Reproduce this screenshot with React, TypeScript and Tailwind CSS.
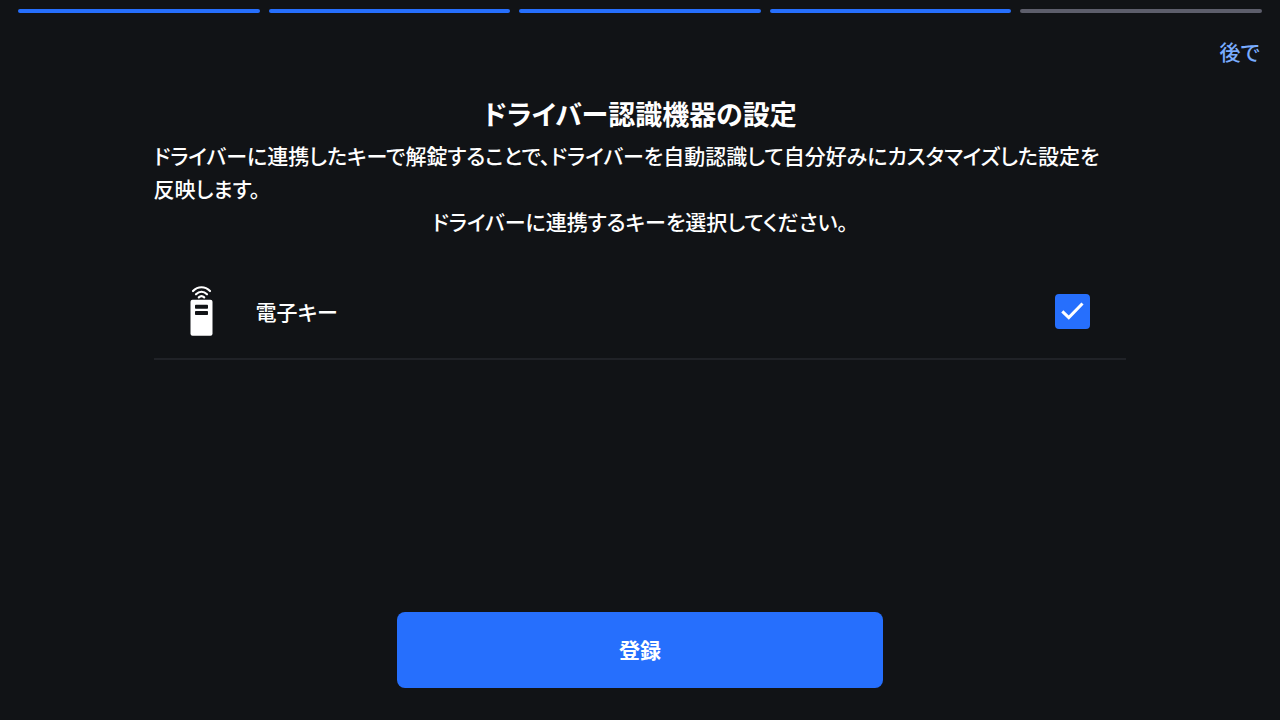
import React, { useState } from 'react';

interface KeyItem {
  id: string;
  label: string;
}

const TOTAL_STEPS = 5;
const CURRENT_STEP = 4;

const keys: KeyItem[] = [{ id: 'smart-key', label: '電子キー' }];

const KeyIcon: React.FC = () => (
  <svg width="24" height="50" viewBox="0 0 24 50" fill="none" aria-hidden="true">
    <g stroke="#fff" strokeWidth="2.2" strokeLinecap="round">
      <path d="M3 5C8 0 15 0 20 5" />
      <path d="M6 8.3C9.3 5 13.7 5 17 8.3" />
      <path d="M8.8 11.4C10.4 9.9 12.6 9.9 14.2 11.4" />
    </g>
    <rect x="0.5" y="13.8" width="22" height="36" rx="2" fill="#fff" />
    <rect x="5" y="18.8" width="13" height="4" rx="0.8" fill="#111316" />
    <rect x="5" y="25" width="13" height="4" rx="0.8" fill="#111316" />
  </svg>
);

const App: React.FC = () => {
  const [selected, setSelected] = useState<string[]>(['smart-key']);

  const toggleKey = (id: string) => {
    setSelected((prev) => (prev.includes(id) ? prev.filter((k) => k !== id) : [...prev, id]));
  };

  return (
    <div
      lang="ja"
      className="min-h-screen flex flex-col bg-[#111316] text-white text-[21px] leading-[33px] font-medium font-['Noto_Sans_CJK_JP',sans-serif] [font-feature-settings:'palt']"
    >
      <div className="flex gap-[9px] px-[18px] pt-[9px]">
        {Array.from({ length: TOTAL_STEPS }, (_, i) => (
          <div key={i} className={`h-1 flex-1 rounded-full ${i < CURRENT_STEP ? 'bg-[#266ffd]' : 'bg-[#5d5e6b]'}`} />
        ))}
      </div>

      <header className="flex justify-end px-5 pt-[22px]">
        <button type="button" className="text-[#79acff] cursor-pointer">
          後で
        </button>
      </header>

      <main className="flex-1 flex flex-col px-[12%]">
        <h1 className="mt-[26px] text-[27px] leading-10 font-bold text-center">ドライバー認識機器の設定</h1>
        <p className="mt-[5px] pr-4">
          ドライバーに連携したキーで解錠することで、ドライバーを自動認識して自分好みにカスタマイズした設定を反映します。
        </p>
        <p className="text-center">ドライバーに連携するキーを選択してください。</p>

        <ul className="mt-[26px]">
          {keys.map((item) => (
            <li key={item.id} className="border-b-2 border-[#202227]">
              <label className="flex items-center h-[94px] px-9 cursor-pointer">
                <KeyIcon />
                <span className="ml-[42px] flex-1">{item.label}</span>
                <span className="grid">
                  <input
                    type="checkbox"
                    className="peer col-start-1 row-start-1 size-[35px] appearance-none rounded border-2 border-[#5d5e6b] checked:border-[#266ffd] checked:bg-[#266ffd]"
                    checked={selected.includes(item.id)}
                    onChange={() => toggleKey(item.id)}
                  />
                  <svg
                    className="col-start-1 row-start-1 pointer-events-none invisible peer-checked:visible"
                    width="35"
                    height="35"
                    viewBox="0 0 35 35"
                    fill="none"
                    aria-hidden="true"
                  >
                    <path d="M7.3 17.3L13.8 23.6L27.5 9.5" stroke="#fff" strokeWidth="3" />
                  </svg>
                </span>
              </label>
            </li>
          ))}
        </ul>
      </main>

      <footer className="flex justify-center pb-8">
        <button type="button" className="w-[38%] h-[76px] pb-0.5 rounded-lg bg-[#266ffd] font-bold cursor-pointer">
          登録
        </button>
      </footer>
    </div>
  );
};

export default App;
